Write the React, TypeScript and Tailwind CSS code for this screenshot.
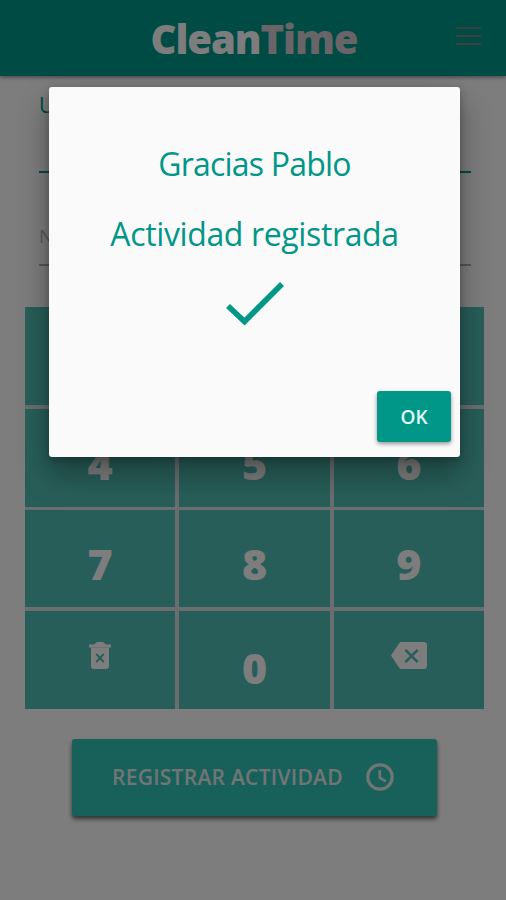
import type { ReactNode } from "react";

function TrashIcon() {
  return (
    <svg viewBox="0 0 22 27" className="h-[27px] w-[22px]" fill="#fafafa">
      <path d="M0 2.400h5.500Q7 0 9 0h4q2 0 3.500 2.400H22v3H0z" />
      <path fillRule="evenodd" d="M2 5.400h18v18.600a3 3 0 0 1-3 3H5a3 3 0 0 1-3-3z M6.500 12.600l3.100 3.400-3.100 3.400 1.400 1.400 3.100-3.400 3.100 3.400 1.400-1.400-3.100-3.400 3.100-3.400-1.400-1.400-3.100 3.400-3.100-3.400z" />
    </svg>
  );
}

function BackspaceIcon() {
  return (
    <svg viewBox="0 3 24 18" className="h-[27px] w-[36px]" fill="#fafafa">
      <path d="M22 3H7c-.69 0-1.230.350-1.590.880L0 12l5.410 8.110c.36.530.9.890 1.590.890h15c1.100 0 2-.9 2-2V5c0-1.100-.9-2-2-2zm-3.600 12.790L17.190 17 13.700 13.510 10.210 17 9 15.790 12.490 12.300 9 8.810 10.210 7.600 13.700 11.090 17.190 7.600 18.400 8.810 14.910 12.300z" />
    </svg>
  );
}

function Key({ children, className = "" }: { children?: ReactNode; className?: string }) {
  return (
    <button className={`flex justify-center bg-[#50bdb2] text-[43px] leading-[59px] font-extrabold text-[#fafafa] ${className}`}>
      {children}
    </button>
  );
}

export default function App() {
  return (
    <div className="relative h-[900px] w-[506px] overflow-hidden bg-[#fafafa] font-['Open_Sans','Noto_Sans',sans-serif]">
      <header className="grid h-[76px] grid-cols-[1fr_auto_1fr] bg-[#009688] shadow-[0_1px_4px_rgba(0,0,0,0.5)]">
        <h1 className="col-start-2 pt-[12px] pl-[2px] text-[40px] leading-[54px] font-extrabold tracking-[-1.1px] text-[#fafafa]">
          Clean<span className="text-[#d0c9ce]">Time</span>
        </h1>
        <button className="mt-[27px] mr-[25px] flex h-[18px] w-[25px] flex-col justify-between justify-self-end" aria-label="Menú">
          <span className="h-[2px] w-full bg-[#74857f]" />
          <span className="h-[2px] w-full bg-[#74857f]" />
          <span className="h-[2px] w-full bg-[#74857f]" />
        </button>
      </header>

      <main className="flex flex-col">
        <div className="mr-[35px] ml-[39px] h-[97px] border-b-2 border-[#009688] pt-[15px] text-[21px] leading-[29px] text-[#009688]">Usuario</div>
        <div className="mr-[35px] ml-[39px] h-[93px] border-b-2 border-[#aeaeae] pt-[50px] text-[19px] leading-[27px] text-[#b0b0b0]">Número</div>

        <div className="mt-[41px] ml-[25px] grid w-[459px] grid-cols-3 grid-rows-[98px_98px_97px_98px] gap-x-[4px] gap-y-[3.667px] bg-[#d7dddd]">
          <Key className="pt-[24px]">1</Key>
          <Key className="pt-[24px]">2</Key>
          <Key className="pt-[24px]">3</Key>
          <Key className="pt-[25px]">4</Key>
          <Key className="pt-[25px]">5</Key>
          <Key className="pt-[25px]">6</Key>
          <Key className="pt-[24px]">7</Key>
          <Key className="pt-[24px]">8</Key>
          <Key className="pt-[24px]">9</Key>
          <Key className="pt-[31px]"><TrashIcon /></Key>
          <Key className="pt-[27px]">0</Key>
          <Key className="pt-[31px]"><BackspaceIcon /></Key>
        </div>

        <button className="mt-[30px] ml-[72px] flex h-[77px] w-[365px] items-center rounded-[3px] bg-[#30c2b4] pl-[40px] text-[#e2ebea] shadow-[0_3px_4px_rgba(0,0,0,0.6)]">
          <span className="w-[254px] text-left text-[21px] font-semibold tracking-[0.260px] whitespace-nowrap">REGISTRAR ACTIVIDAD</span>
          <svg viewBox="0 0 28 28" className="-mt-px h-[28px] w-[28px]" fill="none" stroke="#e2ebea">
            <circle cx="14" cy="14" r="12.200" strokeWidth="3.200" />
            <path d="M13.800 7v7.700l6 3.700" strokeWidth="2.600" />
          </svg>
        </button>
      </main>

      <div className="absolute inset-0 bg-black/50 pt-[87px]">
        <div role="dialog" className="ml-[49px] flex h-[370px] w-[411px] flex-col items-center rounded-[3px] bg-[#fafafa] pt-[53px] text-[#009688] shadow-[0_16px_30px_2px_rgba(0,0,0,0.3),0_3px_8px_rgba(0,0,0,0.25)]">
          <p className="text-[32px] leading-[48px] tracking-[-0.800px] whitespace-nowrap">Gracias Pablo</p>
          <p className="mt-[22px] text-[32px] leading-[48px] tracking-[-0.370px] whitespace-nowrap">Actividad registrada</p>
          <svg viewBox="0 0 58 44" className="mt-[24px] h-[44px] w-[58px]" fill="none" stroke="#009688" strokeWidth="5.600">
            <path d="M2 24l16.500 15.500L56 2" />
          </svg>
          <button className="mt-auto mr-[9px] mb-[15px] h-[51px] w-[74px] self-end rounded-[3px] bg-[#009688] pt-[2px] text-[19px] font-semibold text-[#e0f8f6] shadow-[0_2px_4px_rgba(0,0,0,0.4)]">OK</button>
        </div>
      </div>
    </div>
  );
}
